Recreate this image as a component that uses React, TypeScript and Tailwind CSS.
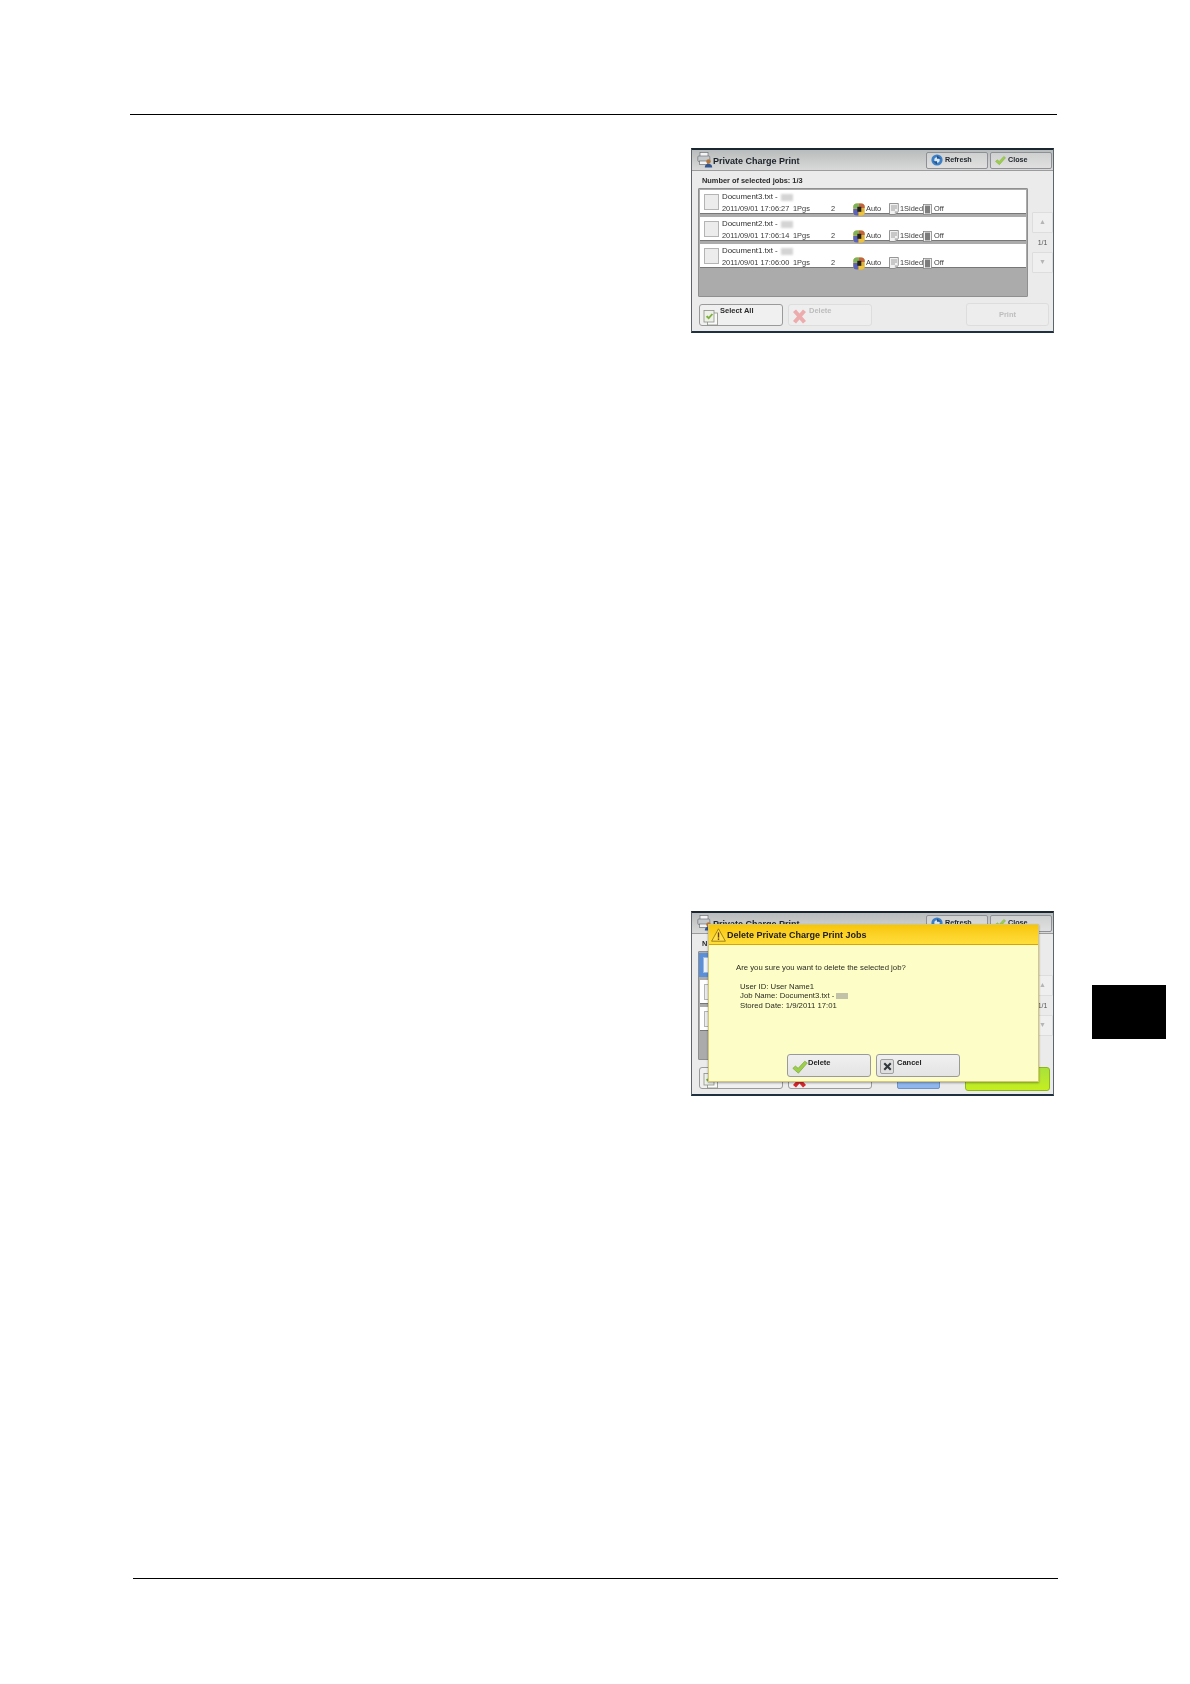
import React from "react";

function PrinterIcon() {
  return (
    <svg width="17" height="16" viewBox="0 0 17 16" className="shrink-0">
      <rect x="3" y="0.5" width="8" height="4" fill="#f4f4f4" stroke="#6f7478" strokeWidth="0.7" />
      <rect x="0.8" y="4" width="12" height="5.5" rx="1" fill="#c5c9cc" stroke="#6f7478" strokeWidth="0.7" />
      <rect x="2.5" y="9" width="8" height="3.5" fill="#f4f4f4" stroke="#6f7478" strokeWidth="0.7" />
      <circle cx="11.5" cy="9.5" r="2.2" fill="#b5763a" />
      <path d="M7.8 15.5c0-2.6 1.5-3.8 3.7-3.8s3.7 1.2 3.7 3.8z" fill="#34568f" />
    </svg>
  );
}

function RefreshIcon() {
  return (
    <svg width="12" height="12" viewBox="0 0 12 12" className="shrink-0">
      <circle cx="6" cy="6" r="5.6" fill="#3d7fc4" />
      <circle cx="6" cy="6" r="2.7" fill="#d9e7f4" />
      <path d="M6 1.6l4 3.2H6z" fill="#1e5394" />
      <path d="M6 10.4l-4-3.2h4z" fill="#1e5394" />
    </svg>
  );
}

function CheckIcon({ size = 11 }: { size?: number }) {
  return (
    <svg width={size} height={size} viewBox="0 0 12 12" className="shrink-0">
      <path d="M0.6 7l2-1.7 2 1.7 5-5.4 1.9 1.4L4.8 10.6z" fill="#9ccf4a" stroke="#7ba63a" strokeWidth="0.5" />
    </svg>
  );
}

function ColorIcon() {
  return (
    <svg width="12" height="13" viewBox="0 0 12 13" className="shrink-0">
      <rect x="0.3" y="0.5" width="11.4" height="12" rx="3.5" fill="#d9b13b" />
      <path d="M0.3 4a3.5 3.5 0 0 1 3.5-3.5H6v5H0.3z" fill="#7fb35a" />
      <path d="M0.3 6h5v6.5H3.8a3.5 3.5 0 0 1-3.5-3.5z" fill="#5c62b8" />
      <path d="M6 .5h2.2A3.5 3.5 0 0 1 11.7 4v1H6z" fill="#c0653f" />
      <rect x="4.3" y="3.8" width="4" height="5" fill="#22201c" />
      <path d="M6 9h5.7a3.5 3.5 0 0 1-3.5 3.5H6z" fill="#edc23f" />
    </svg>
  );
}

function DocIcon() {
  return (
    <svg width="10" height="12" viewBox="0 0 10 12" className="shrink-0">
      <path d="M0.5 0.5h8.8v8L6 11.5H0.5z" fill="#f1f1f1" stroke="#7c7c7c" strokeWidth="0.8" />
      <path d="M2 3h6M2 5h6M2 7h4" stroke="#8a8a8a" strokeWidth="0.8" />
      <path d="M5.8 11.5V8.3h3.5z" fill="#b9b9b9" />
    </svg>
  );
}

function OffIcon() {
  return (
    <svg width="9" height="11" viewBox="0 0 9 11" className="shrink-0">
      <rect x="0.4" y="0.4" width="8.2" height="10.2" fill="#f2f2f2" stroke="#777" strokeWidth="0.7" />
      <rect x="2" y="1.6" width="5" height="7.8" fill="#7d7d7d" />
    </svg>
  );
}

function SelectAllIcon() {
  return (
    <svg width="16" height="17" viewBox="0 0 16 17" className="shrink-0">
      <rect x="4.5" y="4" width="10" height="12" fill="#fafafa" stroke="#8b9186" strokeWidth="0.8" />
      <rect x="1" y="1.5" width="10" height="11.5" fill="#eef0ea" stroke="#8b9186" strokeWidth="0.8" />
      <path d="M2.8 7.8l1.6-1.2 1.3 1.2 3-3.4 1.4 1-4.4 5z" fill="#7fb23d" />
    </svg>
  );
}

function RedCross({ faded }: { faded: boolean }) {
  return (
    <svg width="15" height="15" viewBox="0 0 15 15" className="shrink-0">
      <path
        d="M1 3l3-2.5L7.5 4.5 11 .5l3 2.5-4 4.5 4 4.5-3 2.5-3.5-4-3.5 4-3-2.5 4-4.5z"
        fill={faded ? "#ecabad" : "#d8282c"}
      />
    </svg>
  );
}

function WarningIcon() {
  return (
    <svg width="15" height="14" viewBox="0 0 15 14" className="shrink-0">
      <path d="M7.5 0.8L14.4 13.2H0.6z" fill="#ffe04a" stroke="#8a6d10" strokeWidth="0.8" strokeLinejoin="round" />
      <rect x="6.8" y="4.4" width="1.4" height="5.2" fill="#6a3b10" />
      <rect x="6.8" y="10.4" width="1.4" height="1.5" fill="#6a3b10" />
    </svg>
  );
}

function CancelIcon() {
  return (
    <div className="flex h-[15px] w-[14px] shrink-0 items-center justify-center rounded-[2px] border border-[#a0a0a0] bg-[#dedede]">
      <svg width="9" height="9" viewBox="0 0 9 9">
        <path d="M0.5 2L2 0.5l2.5 2.5L7 .5 8.5 2 6 4.5 8.5 7 7 8.5 4.5 6 2 8.5.5 7 3 4.5z" fill="#33383c" />
      </svg>
    </div>
  );
}

function Smudge() {
  return <span className="ml-[3px] inline-block h-[7px] w-[12px] bg-[#d4d4d4] blur-[1px]" />;
}

const jobs = [
  { name: "Document3.txt", time: "2011/09/01 17:06:27" },
  { name: "Document2.txt", time: "2011/09/01 17:06:14" },
  { name: "Document1.txt", time: "2011/09/01 17:06:00" },
];

function JobRow({ name, time, covered, selected }: { name: string; time: string; covered: boolean; selected: boolean }) {
  return (
    <div className="flex h-[24px] items-start border-b border-b-[#777777] bg-white">
      <div
        className={
          selected
            ? "ml-[-1px] flex h-[24px] w-[22px] shrink-0 items-center justify-center bg-[#5b8fd8]"
            : "ml-[4px] mt-[4px] h-[16px] w-[15px] shrink-0 border border-[#b4b4b4] bg-[#ececec]"
        }
      >
        {selected && <div className="h-[16px] w-[15px] border border-[#9fb9dc] bg-[#eef3fa]" />}
      </div>
      {!covered && (
        <div className="ml-[3px] flex flex-col pt-[1px]">
          <div className="flex h-[12px] items-center text-[7.9px] leading-none text-[#2f2f2f]">
            {name} - <Smudge />
          </div>
          <div className="flex h-[12px] items-center text-[7.4px] leading-none text-[#3a3a3a]">
            <span className="w-[71px] shrink-0">{time}</span>
            <span className="w-[38px] shrink-0">1Pgs</span>
            <span className="w-[22px] shrink-0">2</span>
            <ColorIcon />
            <span className="ml-[1px] w-[23px] shrink-0">Auto</span>
            <DocIcon />
            <span className="ml-[1px] w-[23px] shrink-0">1Sided</span>
            <OffIcon />
            <span className="ml-[2px]">Off</span>
          </div>
        </div>
      )}
    </div>
  );
}

function TitleButton({ label, icon }: { label: string; icon: React.ReactNode }) {
  return (
    <div className="flex h-[17px] w-[62px] items-center gap-[2px] rounded-[2px] border border-[#8d9196] bg-gradient-to-b from-[#cfd0d0] to-[#e0e0e0] pl-[4px] text-[7.2px] font-bold leading-none text-[#22282e]">
      {icon}
      {label}
    </div>
  );
}

function Panel({ dialog }: { dialog?: boolean }) {
  return (
    <div className="relative h-[185px] w-[363px] shrink-0 border-x border-t-2 border-b-2 border-x-[#5c646c] border-t-[#1a2630] border-b-[#1f3040] bg-[#ebebeb] blur-[0.5px]">
      <div className="flex h-[21px] items-center border-b border-b-[#9b9b9b] bg-gradient-to-b from-[#b9bcbc] to-[#d9d9d9] pl-[5px] pr-[1px]">
        <PrinterIcon />
        <span className="ml-[-1px] pt-[2px] text-[9px] font-bold leading-none text-[#1c2228]">Private Charge Print</span>
        <div className="ml-auto flex gap-[2px]">
          <TitleButton label="Refresh" icon={<RefreshIcon />} />
          <TitleButton label="Close" icon={<CheckIcon />} />
        </div>
      </div>
      <div className="flex h-[17px] items-center pl-[10px] pt-[2px] text-[7.4px] font-bold leading-none text-[#2a2a2a]">
        {dialog ? "N" : "Number of selected jobs: 1/3"}
      </div>
      <div className="flex items-start pl-[6px]">
        <div className="flex h-[109px] w-[330px] flex-col gap-[3px] rounded-[1px] border border-[#8f8f8f] bg-[#ababab] p-[1px]">
          {jobs.map((job, i) => (
            <JobRow key={job.name} name={job.name} time={job.time} covered={!!dialog} selected={!!dialog && i === 0} />
          ))}
        </div>
        <div className="ml-[4px] mt-[24px] flex w-[21px] flex-col items-center text-[#b5b5b5]">
          <div className="flex h-[21px] w-[21px] items-center justify-center rounded-[1px] border border-[#dddddd] bg-[#efefef] text-[7px]">▲</div>
          <div className="flex h-[19px] items-center text-[7px] leading-none text-[#555555]">1/1</div>
          <div className="flex h-[21px] w-[21px] items-center justify-center rounded-[1px] border border-[#dddddd] bg-[#efefef] text-[7px]">▼</div>
        </div>
      </div>
      <div className="flex items-start pl-[7px] pt-[7px]">
        <div className="flex h-[22px] w-[84px] items-start rounded-[3px] border border-[#9a9a9a] bg-[#f0f0f0] pl-[3px] pt-[2px] text-[7.5px] font-bold leading-none text-[#2a2a2a]">
          <span className="mt-[2px]"><SelectAllIcon /></span>
          {!dialog && <span className="ml-[1px]">Select All</span>}
        </div>
        <div
          className={
            dialog
              ? "ml-[5px] flex h-[22px] w-[84px] items-start rounded-[3px] border border-[#9b9b9b] bg-[#f0f0f0] pl-[3px] pt-[3px] text-[7.5px] font-bold leading-none text-[#bcbcbc]"
              : "ml-[5px] flex h-[22px] w-[84px] items-start rounded-[3px] border border-[#dddddd] bg-[#eeeeee] pl-[3px] pt-[2px] text-[7.5px] font-bold leading-none text-[#bcbcbc]"
          }
        >
          <span className="mt-[2px]"><RedCross faded={!dialog} /></span>
          {!dialog && <span className="ml-[2px]">Delete</span>}
        </div>
        {dialog ? (
          <>
            <div className="ml-[25px] h-[22px] w-[43px] rounded-[2px] border border-[#6d94c8] bg-[#8fb7ee]" />
            <div className="ml-[25px] h-[24px] w-[85px] rounded-[3px] border border-[#8fb71c] bg-gradient-to-b from-[#a9e23a] to-[#c5ee1e]" />
          </>
        ) : (
          <div className="ml-[94px] mt-[-1px] flex h-[23px] w-[83px] items-center justify-center rounded-[3px] border border-[#dddddd] bg-[#ededed] text-[7.5px] font-bold leading-none text-[#bdbdbd]">
            Print
          </div>
        )}
      </div>
      {dialog && (
        <div className="absolute left-[16px] top-[11px] flex h-[158px] w-[331px] flex-col border border-[#d6c878] bg-[#fdfdc8] shadow-[0_1px_2px_rgba(0,0,0,0.35)]">
          <div className="flex h-[20px] shrink-0 items-center gap-[1px] border-b border-b-[#d9a400] bg-gradient-to-b from-[#f8c600] to-[#ffde3a] pl-[2px] text-[9px] font-bold leading-none text-[#26211a]">
            <WarningIcon />
            <span className="pt-[2px]">Delete Private Charge Print Jobs</span>
          </div>
          <div className="pl-[27px] pt-[18px] text-[7.75px] leading-[9.5px] text-[#2b2b20]">
            <div>Are you sure you want to delete the selected job?</div>
            <div className="pl-[4px] pt-[9px]">
              <div>User ID: User Name1</div>
              <div className="flex items-center">
                Job Name: Document3.txt -
                <span className="ml-[2px] inline-block h-[6px] w-[12px] bg-[#c2c2a8]" />
              </div>
              <div>Stored Date: 1/9/2011 17:01</div>
            </div>
          </div>
          <div className="mb-[4px] mt-auto flex gap-[5px] pl-[78px]">
            <div className="flex h-[23px] w-[84px] items-start rounded-[3px] border border-[#9a9a9a] bg-gradient-to-b from-[#f0f0f0] to-[#e4e4e4] pl-[4px] text-[7.5px] font-bold leading-none text-[#222222]">
              <span className="mt-[4px]"><CheckIcon size={16} /></span>
              <span className="mt-[4px]">Delete</span>
            </div>
            <div className="flex h-[23px] w-[84px] items-start rounded-[3px] border border-[#9a9a9a] bg-gradient-to-b from-[#f0f0f0] to-[#e4e4e4] pl-[3px] text-[7.5px] font-bold leading-none text-[#222222]">
              <span className="mt-[4px]"><CancelIcon /></span>
              <span className="ml-[3px] mt-[4px]">Cancel</span>
            </div>
          </div>
        </div>
      )}
    </div>
  );
}

export default function App() {
  return (
    <div className="flex h-[1684px] w-[1190px] flex-col overflow-hidden bg-white font-['Liberation_Sans',Arial,sans-serif]">
      <div className="ml-[130px] mt-[114px] h-px w-[927px] shrink-0 bg-black" />
      <div className="ml-[691px] mt-[33px]">
        <Panel />
      </div>
      <div className="ml-[691px] mt-[578px] flex items-start">
        <Panel dialog />
        <div className="ml-[38px] mt-[74px] h-[54px] w-[74px] shrink-0 bg-black" />
      </div>
      <div className="ml-[133px] mt-[482px] h-px w-[925px] shrink-0 bg-black" />
    </div>
  );
}
